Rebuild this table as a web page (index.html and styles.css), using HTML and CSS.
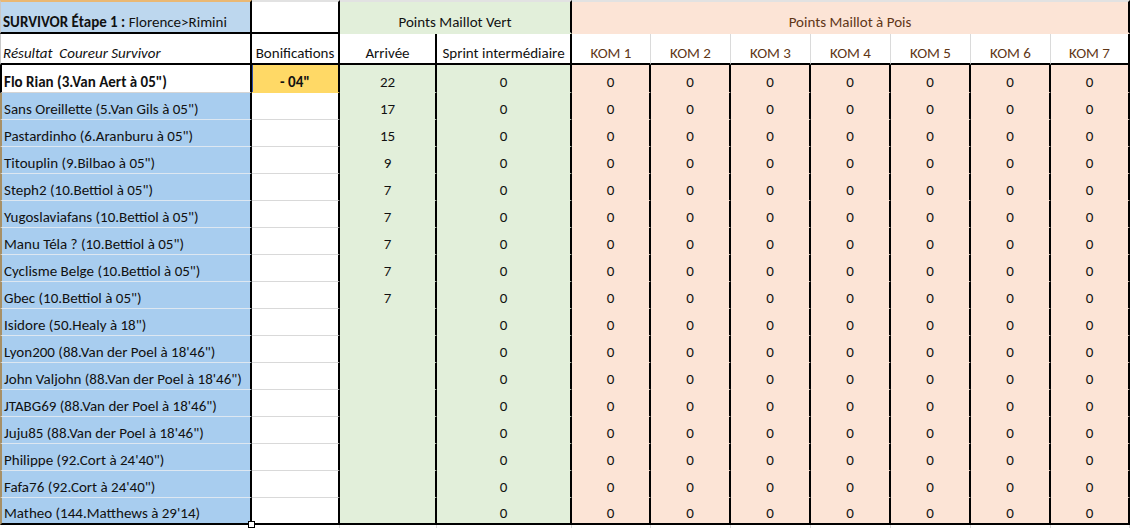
FILE: index.html
```html
<!DOCTYPE html>
<html lang="fr">
<head>
<meta charset="utf-8">
<title>Survivor Étape 1</title>
<link rel="stylesheet" href="styles.css">
</head>
<body>
<div class="sheet">
  <!-- row 1 -->
  <div class="c t ta left"><b>SURVIVOR Étape 1 :</b>&nbsp;Florence&gt;Rimini</div>
  <div class="c t"></div>
  <div class="c t g span2">Points Maillot Vert</div>
  <div class="c t p span7 kh">Points Maillot à Pois</div>

  <!-- row 2 -->
  <div class="c h ha left"><i>Résultat&nbsp; Coureur Survivor</i></div>
  <div class="c h">Bonifications</div>
  <div class="c h">Arrivée</div>
  <div class="c h">Sprint intermédiaire</div>
  <div class="c h kh light">KOM 1</div>
  <div class="c h kh light">KOM 2</div>
  <div class="c h kh light">KOM 3</div>
  <div class="c h kh light">KOM 4</div>
  <div class="c h kh light">KOM 5</div>
  <div class="c h kh light">KOM 6</div>
  <div class="c h kh">KOM 7</div>

  <!-- data rows -->
  <div class="c n first left"><b>Flo Rian (3.Van Aert à 05")</b></div>
  <div class="c b bonus"><b>- 04"</b></div>
  <div class="c g">22</div><div class="c g">0</div>
  <div class="c p">0</div><div class="c p">0</div><div class="c p">0</div><div class="c p">0</div><div class="c p">0</div><div class="c p">0</div><div class="c p">0</div>

  <div class="c n left">Sans Oreillette (5.Van Gils à 05")</div>
  <div class="c b"></div>
  <div class="c g">17</div><div class="c g">0</div>
  <div class="c p">0</div><div class="c p">0</div><div class="c p">0</div><div class="c p">0</div><div class="c p">0</div><div class="c p">0</div><div class="c p">0</div>

  <div class="c n left">Pastardinho (6.Aranburu à 05")</div>
  <div class="c b"></div>
  <div class="c g">15</div><div class="c g">0</div>
  <div class="c p">0</div><div class="c p">0</div><div class="c p">0</div><div class="c p">0</div><div class="c p">0</div><div class="c p">0</div><div class="c p">0</div>

  <div class="c n left">Titouplin (9.Bilbao à 05")</div>
  <div class="c b"></div>
  <div class="c g">9</div><div class="c g">0</div>
  <div class="c p">0</div><div class="c p">0</div><div class="c p">0</div><div class="c p">0</div><div class="c p">0</div><div class="c p">0</div><div class="c p">0</div>

  <div class="c n left">Steph2 (10.Bettiol à 05")</div>
  <div class="c b"></div>
  <div class="c g">7</div><div class="c g">0</div>
  <div class="c p">0</div><div class="c p">0</div><div class="c p">0</div><div class="c p">0</div><div class="c p">0</div><div class="c p">0</div><div class="c p">0</div>

  <div class="c n left">Yugoslaviafans (10.Bettiol à 05")</div>
  <div class="c b"></div>
  <div class="c g">7</div><div class="c g">0</div>
  <div class="c p">0</div><div class="c p">0</div><div class="c p">0</div><div class="c p">0</div><div class="c p">0</div><div class="c p">0</div><div class="c p">0</div>

  <div class="c n left">Manu Téla ? (10.Bettiol à 05")</div>
  <div class="c b"></div>
  <div class="c g">7</div><div class="c g">0</div>
  <div class="c p">0</div><div class="c p">0</div><div class="c p">0</div><div class="c p">0</div><div class="c p">0</div><div class="c p">0</div><div class="c p">0</div>

  <div class="c n left">Cyclisme Belge (10.Bettiol à 05")</div>
  <div class="c b"></div>
  <div class="c g">7</div><div class="c g">0</div>
  <div class="c p">0</div><div class="c p">0</div><div class="c p">0</div><div class="c p">0</div><div class="c p">0</div><div class="c p">0</div><div class="c p">0</div>

  <div class="c n left">Gbec (10.Bettiol à 05")</div>
  <div class="c b"></div>
  <div class="c g">7</div><div class="c g">0</div>
  <div class="c p">0</div><div class="c p">0</div><div class="c p">0</div><div class="c p">0</div><div class="c p">0</div><div class="c p">0</div><div class="c p">0</div>

  <div class="c n left">Isidore (50.Healy à 18")</div>
  <div class="c b"></div>
  <div class="c g"></div><div class="c g">0</div>
  <div class="c p">0</div><div class="c p">0</div><div class="c p">0</div><div class="c p">0</div><div class="c p">0</div><div class="c p">0</div><div class="c p">0</div>

  <div class="c n left">Lyon200 (88.Van der Poel à 18'46")</div>
  <div class="c b"></div>
  <div class="c g"></div><div class="c g">0</div>
  <div class="c p">0</div><div class="c p">0</div><div class="c p">0</div><div class="c p">0</div><div class="c p">0</div><div class="c p">0</div><div class="c p">0</div>

  <div class="c n left">John Valjohn (88.Van der Poel à 18'46")</div>
  <div class="c b"></div>
  <div class="c g"></div><div class="c g">0</div>
  <div class="c p">0</div><div class="c p">0</div><div class="c p">0</div><div class="c p">0</div><div class="c p">0</div><div class="c p">0</div><div class="c p">0</div>

  <div class="c n left">JTABG69 (88.Van der Poel à 18'46")</div>
  <div class="c b"></div>
  <div class="c g"></div><div class="c g">0</div>
  <div class="c p">0</div><div class="c p">0</div><div class="c p">0</div><div class="c p">0</div><div class="c p">0</div><div class="c p">0</div><div class="c p">0</div>

  <div class="c n left">Juju85 (88.Van der Poel à 18'46")</div>
  <div class="c b"></div>
  <div class="c g"></div><div class="c g">0</div>
  <div class="c p">0</div><div class="c p">0</div><div class="c p">0</div><div class="c p">0</div><div class="c p">0</div><div class="c p">0</div><div class="c p">0</div>

  <div class="c n left">Philippe (92.Cort à 24'40")</div>
  <div class="c b"></div>
  <div class="c g"></div><div class="c g">0</div>
  <div class="c p">0</div><div class="c p">0</div><div class="c p">0</div><div class="c p">0</div><div class="c p">0</div><div class="c p">0</div><div class="c p">0</div>

  <div class="c n left">Fafa76 (92.Cort à 24'40")</div>
  <div class="c b"></div>
  <div class="c g"></div><div class="c g">0</div>
  <div class="c p">0</div><div class="c p">0</div><div class="c p">0</div><div class="c p">0</div><div class="c p">0</div><div class="c p">0</div><div class="c p">0</div>

  <div class="c n left last handle">Matheo (144.Matthews à 29'14)</div>
  <div class="c b last"></div>
  <div class="c g last"></div><div class="c g last">0</div>
  <div class="c p last">0</div><div class="c p last">0</div><div class="c p last">0</div><div class="c p last">0</div><div class="c p last">0</div><div class="c p last">0</div><div class="c p last">0</div>

  <!-- grid stub below -->
  <div class="s"></div><div class="s"></div><div class="s"></div><div class="s"></div><div class="s"></div><div class="s"></div><div class="s"></div><div class="s"></div><div class="s"></div><div class="s"></div><div class="s"></div>
</div>
</body>
</html>
```

FILE: styles.css
```css
html, body {
  margin: 0;
  padding: 0;
  background: #ffffff;
}

body {
  font-family: "Carlito", "Lato", "Liberation Sans", sans-serif;
  font-size: 15px;
  color: #111111;
}

.sheet {
  display: grid;
  grid-template-columns: 252px 88px 97px 135px 79px 80px 80px 80px 80px 80px 79px;
  grid-template-rows: 34px 31px 28px repeat(16, 27px) 3px;
  width: 1130px;
}

.c {
  box-sizing: border-box;
  display: flex;
  align-items: flex-end;
  justify-content: center;
  padding-bottom: 1px;
  line-height: 17px;
  white-space: nowrap;
  overflow: hidden;
  border-right: 2px solid #000;
  border-bottom: 1px solid transparent;
  background: #ffffff;
}

.left {
  justify-content: flex-start;
  padding-left: 2px;
}

.span2 { grid-column: span 2; }
.span7 { grid-column: span 7; }

/* row 1 */
.t {
  border-top: 2px solid #e2e2e2;
  border-bottom: 2px solid #000;
}
.ta {
  background: #bdd7ee;
  border-top-color: #eab873;
  border-left: 1px solid #c8c8c8;
}

/* row 2 */
.h {
  border-bottom: 2px solid #000;
}
.ha {
  border-left: 1px solid #c8c8c8;
}
.light {
  border-right: 1px solid #dadada;
}
.kh {
  color: #5f3616;
}

/* data */
.n {
  background: #a8cdef;
  border-left: 2px solid #a89066;
  border-bottom: 1px solid #dde7f1;
}
.n.first {
  background: #ffffff;
  border-left: 2px solid #000;
  border-bottom: 1px solid #d4d4d4;
}
.b {
  border-bottom: 1px solid #d9d9d9;
}
.bonus {
  background: #ffd966;
  border-bottom-color: #ffd966;
  box-shadow: inset 1px 0 0 #2f4fa8;
}
.g {
  background: #e2efda;
  border-bottom-color: #e2efda;
}
.p {
  background: #fce4d6;
  border-bottom-color: #fce4d6;
}

.last {
  border-bottom: 2px solid #000;
}
.n.last {
  border-bottom: 2px solid #000;
}

.handle {
  position: relative;
  overflow: visible;
}
.handle::after {
  content: "";
  position: absolute;
  right: -5px;
  bottom: -5px;
  width: 5px;
  height: 5px;
  background: #ffffff;
  border: 1px solid #000;
  z-index: 2;
}

/* stub of empty grid below the table */
.s {
  box-sizing: border-box;
  border-right: 1px solid #dadada;
}
```
